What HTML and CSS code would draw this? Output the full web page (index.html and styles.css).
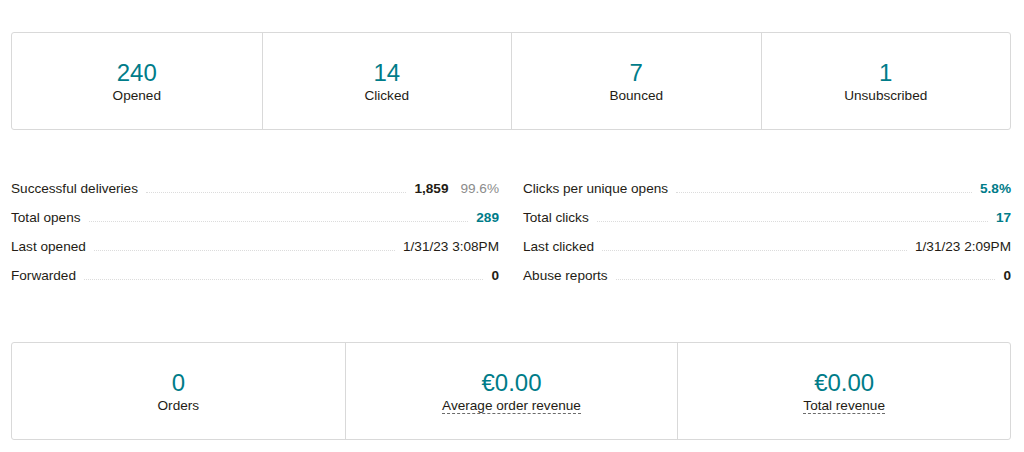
FILE: index.html
```html
<!DOCTYPE html>
<html>
<head>
<meta charset="utf-8">
<link rel="stylesheet" href="styles.css">
</head>
<body>
<div class="page">
  <div class="card cols-4">
    <div class="cell"><div class="num">240</div><div class="label">Opened</div></div>
    <div class="cell"><div class="num">14</div><div class="label">Clicked</div></div>
    <div class="cell"><div class="num">7</div><div class="label">Bounced</div></div>
    <div class="cell"><div class="num">1</div><div class="label">Unsubscribed</div></div>
  </div>

  <div class="stats">
    <ul class="list">
      <li class="row"><span class="key">Successful deliveries</span><span class="dots"></span><span class="val strong">1,859</span><span class="val muted">99.6%</span></li>
      <li class="row"><span class="key">Total opens</span><span class="dots"></span><span class="val teal">289</span></li>
      <li class="row"><span class="key">Last opened</span><span class="dots"></span><span class="val">1/31/23 3:08PM</span></li>
      <li class="row"><span class="key">Forwarded</span><span class="dots"></span><span class="val strong">0</span></li>
    </ul>
    <ul class="list">
      <li class="row"><span class="key">Clicks per unique opens</span><span class="dots"></span><span class="val teal">5.8%</span></li>
      <li class="row"><span class="key">Total clicks</span><span class="dots"></span><span class="val teal">17</span></li>
      <li class="row"><span class="key">Last clicked</span><span class="dots"></span><span class="val">1/31/23 2:09PM</span></li>
      <li class="row"><span class="key">Abuse reports</span><span class="dots"></span><span class="val strong">0</span></li>
    </ul>
  </div>

  <div class="card cols-3">
    <div class="cell"><div class="num">0</div><div class="label">Orders</div></div>
    <div class="cell"><div class="num">€0.00</div><div class="label"><span class="tip">Average order revenue</span></div></div>
    <div class="cell"><div class="num">€0.00</div><div class="label"><span class="tip">Total revenue</span></div></div>
  </div>
</div>
</body>
</html>
```

FILE: styles.css
```css
html, body {
  margin: 0;
  padding: 0;
  background: #ffffff;
}
body {
  font-family: "Liberation Sans", Arial, sans-serif;
  color: #241c15;
}
.page {
  padding: 32px 13px 0 11px;
}
.card {
  display: grid;
  border: 1px solid #d9d9d9;
  border-radius: 3px;
  height: 96px;
}
.cols-4 { grid-template-columns: repeat(4, 1fr); }
.cols-3 { grid-template-columns: repeat(3, 1fr); }
.cell {
  display: flex;
  flex-direction: column;
  align-items: center;
  justify-content: center;
  border-left: 1px solid #d9d9d9;
  padding-top: 3px;
}
.cell:first-child { border-left: none; }
.num {
  font-size: 24px;
  line-height: 26px;
  color: #007c89;
}
.label {
  font-size: 13.6px;
  line-height: 18px;
  color: #241c15;
  margin-top: 1px;
}
.tip {
  border-bottom: 1px dashed #6b6b6b;
}
.stats {
  display: grid;
  grid-template-columns: 1fr 1fr;
  column-gap: 24px;
  padding: 44px 0 52px;
}
.list {
  list-style: none;
  margin: 0;
  padding: 0;
}
.row {
  display: flex;
  align-items: baseline;
  height: 29px;
  line-height: 29px;
  font-size: 13.6px;
}
.key { color: #241c15; }
.dots {
  flex: 1;
  margin: 0 8px;
  border-bottom: 1px dotted #dcdcdc;
}
.val { color: #241c15; }
.strong { font-weight: bold; }
.teal { color: #007c89; font-weight: bold; }
.muted { color: #8c8c8c; margin-left: 12px; }
```
